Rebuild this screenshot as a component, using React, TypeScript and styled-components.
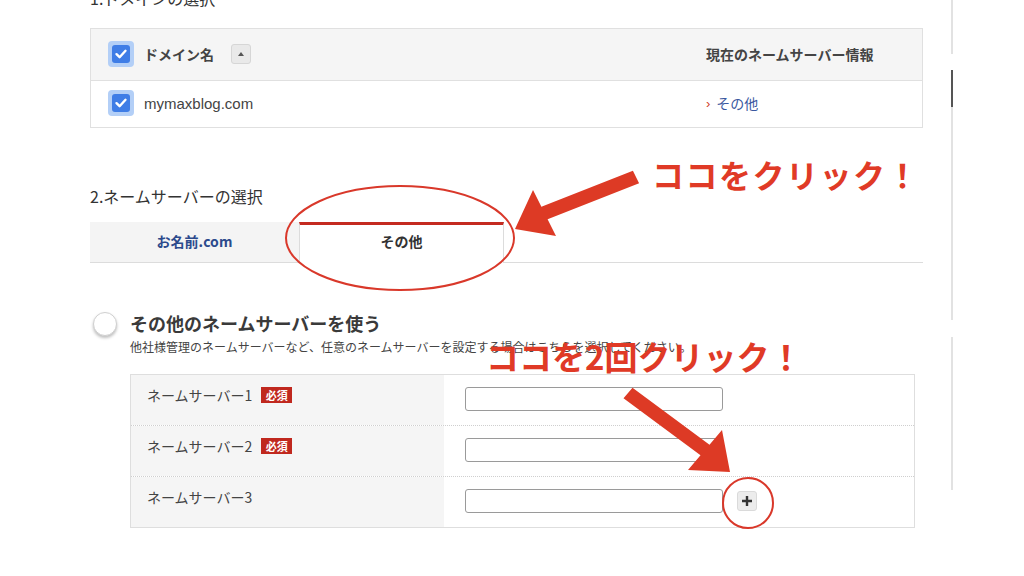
import React from 'react';
import styled, { createGlobalStyle } from 'styled-components';

const GlobalStyle = createGlobalStyle`
  html, body { margin: 0; padding: 0; background: #fff; }
  body { font-family: "Liberation Sans", "Noto Sans CJK JP", sans-serif; color: #333; }
  #root { width: 1024px; height: 576px; overflow: hidden; }
  * { box-sizing: border-box; }
`;

const JP = `"Noto Sans CJK JP", "Liberation Sans", sans-serif`;

const Page = styled.div`
  position: relative;
  width: 1024px;
  height: 576px;
  overflow: hidden;
  display: flex;
  background: #fff;
`;

const Main = styled.main`
  margin-left: 90px;
  width: 833px;
  display: flex;
  flex-direction: column;
`;

const SectionTitle = styled.h2<{ $top: number }>`
  margin: ${(p) => p.$top}px 0 0;
  font-family: ${JP};
  font-size: 16px;
  line-height: 20px;
  font-weight: 400;
  color: #333;
`;

const DomainTable = styled.div`
  margin-top: 20px;
  border: 1px solid #e0e0e0;
  display: flex;
  flex-direction: column;
`;

const DomainRow = styled.div<{ $head?: boolean }>`
  display: flex;
  align-items: center;
  height: ${(p) => (p.$head ? 52 : 46)}px;
  padding-bottom: 2px;
  background: ${(p) => (p.$head ? '#f5f5f5' : '#fff')};
  border-bottom: ${(p) => (p.$head ? '1px solid #e0e0e0' : 'none')};
  font-family: ${JP};
  font-size: 14px;
`;

const NameCell = styled.div`
  width: 615px;
  padding-left: 17px;
  display: flex;
  align-items: center;
`;

const InfoCell = styled.div`
  flex: 1;
  display: flex;
  align-items: center;
`;

const HeadText = styled.span<{ $first?: boolean }>`
  font-weight: 700;
  color: #444;
  margin-left: ${(p) => (p.$first ? 10 : 0)}px;
`;

const DomainText = styled.span`
  font-family: "Liberation Sans", sans-serif;
  font-size: 15px;
  color: #444;
  margin-left: 10px;
`;

const CheckOuter = styled.span`
  width: 26px;
  height: 26px;
  border-radius: 4px;
  background: #b3cff7;
  display: flex;
  align-items: center;
  justify-content: center;
`;

const CheckInner = styled.span`
  width: 18px;
  height: 18px;
  border-radius: 3px;
  background: #3f7de6;
  display: flex;
  align-items: center;
  justify-content: center;
`;

const SortButton = styled.span`
  margin-left: 17px;
  width: 20px;
  height: 20px;
  border: 1px solid #d6d6d6;
  border-radius: 3px;
  background: #e9e9e9;
  display: flex;
  align-items: center;
  justify-content: center;
`;

const Chevron = styled.span`
  color: #d03a2a;
  font-size: 13px;
  margin-right: 6px;
  font-family: "Liberation Sans", sans-serif;
`;

const LinkText = styled.span`
  color: #3a58a0;
`;

const Tabs = styled.div`
  margin-top: 16px;
  display: flex;
  height: 41px;
  border-bottom: 1px solid #dcdcdc;
`;

const Tab = styled.div<{ $active?: boolean; $w: number }>`
  width: ${(p) => p.$w}px;
  display: flex;
  align-items: center;
  justify-content: center;
  font-family: ${JP};
  font-size: 14px;
  font-weight: 700;
  background: ${(p) => (p.$active ? '#fff' : '#f4f4f4')};
  color: ${(p) => (p.$active ? '#333' : '#2c4a8c')};
  border-top: ${(p) => (p.$active ? '3px solid #c42a20' : '1px solid #f4f4f4')};
  border-left: ${(p) => (p.$active ? '1px solid #dcdcdc' : 'none')};
  border-right: ${(p) => (p.$active ? '1px solid #dcdcdc' : 'none')};
  margin-bottom: ${(p) => (p.$active ? '-1px' : '0')};
  padding-bottom: ${(p) => (p.$active ? '6px' : '4px')};
`;

const RadioRow = styled.div`
  margin-top: 49px;
  display: flex;
  align-items: center;
  gap: 13px;
  padding-left: 3px;
`;

const Radio = styled.span`
  width: 24px;
  height: 24px;
  border-radius: 50%;
  border: 1px solid #d0d0d0;
  background: #fff;
  box-shadow: 0 2px 3px rgba(0, 0, 0, 0.25);
`;

const RadioTitle = styled.span`
  font-family: ${JP};
  font-size: 18px;
  line-height: 24px;
  font-weight: 700;
  color: #3a3a3a;
  margin-top: -2px;
`;

const RadioNote = styled.p`
  margin: 3px 0 0 40px;
  font-family: ${JP};
  font-size: 12px;
  line-height: 16px;
  color: #444;
`;

const ServerTable = styled.div`
  margin: 19px 0 0 40px;
  width: 785px;
  border: 1px solid #dedede;
  display: flex;
  flex-direction: column;
`;

const ServerRow = styled.div<{ $last?: boolean }>`
  display: flex;
  height: ${(p) => (p.$last ? 50 : 51)}px;
  border-bottom: ${(p) => (p.$last ? 'none' : '1px dotted #cfcfcf')};
`;

const LabelCell = styled.div`
  width: 313px;
  background: #f5f5f5;
  padding: 10px 0 0 16px;
  display: flex;
  align-items: flex-start;
  gap: 9px;
  font-family: ${JP};
  font-size: 14px;
  line-height: 20px;
  color: #444;
`;

const Badge = styled.span`
  margin-top: 2px;
  width: 31px;
  height: 16px;
  background: #c0281e;
  color: #fff;
  font-size: 11px;
  line-height: 16px;
  font-weight: 700;
  text-align: center;
`;

const ValueCell = styled.div`
  flex: 1;
  padding: 12px 0 0 21px;
  display: flex;
  align-items: flex-start;
  gap: 14px;
`;

const TextInput = styled.input`
  width: 258px;
  height: 24px;
  border: 1px solid #9a9a9a;
  border-radius: 3px;
  background: #fff;
  margin: 0;
  padding: 0 6px;
`;

const PlusButton = styled.span`
  margin-top: 2px;
  width: 20px;
  height: 20px;
  border: 1px solid #dadada;
  border-radius: 3px;
  background: #ececec;
  display: flex;
  align-items: center;
  justify-content: center;
`;

const Rail = styled.div`
  margin-left: 28px;
  width: 2px;
  display: flex;
  flex-direction: column;
`;

const RailSeg = styled.div<{ $h: number; $gap: number; $color?: string }>`
  width: 2px;
  height: ${(p) => p.$h}px;
  margin-top: ${(p) => p.$gap}px;
  background: ${(p) => p.$color || '#e2e2e2'};
`;

const Overlay = styled.svg`
  position: absolute;
  left: 0;
  top: 0;
  pointer-events: none;
`;

const Callout = styled.div<{ $x: number; $y: number; $size: number; $ls: number }>`
  position: absolute;
  left: ${(p) => p.$x}px;
  top: ${(p) => p.$y}px;
  font-family: ${JP};
  font-weight: 700;
  font-size: ${(p) => p.$size}px;
  line-height: 40px;
  letter-spacing: ${(p) => p.$ls}px;
  color: #e03a26;
  white-space: nowrap;
`;

const Check = () => (
  <CheckOuter>
    <CheckInner>
      <svg width="14" height="14" viewBox="0 0 14 14">
        <path d="M2.5 7.2 L5.6 10.2 L11.5 3.8" fill="none" stroke="#fff" strokeWidth="2.4" strokeLinecap="round" strokeLinejoin="round" />
      </svg>
    </CheckInner>
  </CheckOuter>
);

const servers = [
  { label: 'ネームサーバー1', required: true },
  { label: 'ネームサーバー2', required: true },
  { label: 'ネームサーバー3', required: false },
];

export default function App() {
  return (
    <Page>
      <GlobalStyle />
      <Main>
        <SectionTitle $top={-12}>1.ドメインの選択</SectionTitle>
        <DomainTable>
          <DomainRow $head>
            <NameCell>
              <Check />
              <HeadText $first>ドメイン名</HeadText>
              <SortButton>
                <svg width="6" height="4" viewBox="0 0 6 4">
                  <path d="M0 4 L3 0 L6 4 Z" fill="#555" />
                </svg>
              </SortButton>
            </NameCell>
            <InfoCell>
              <HeadText>現在のネームサーバー情報</HeadText>
            </InfoCell>
          </DomainRow>
          <DomainRow>
            <NameCell>
              <Check />
              <DomainText>mymaxblog.com</DomainText>
            </NameCell>
            <InfoCell>
              <Chevron>›</Chevron>
              <LinkText>その他</LinkText>
            </InfoCell>
          </DomainRow>
        </DomainTable>

        <SectionTitle $top={58}>2.ネームサーバーの選択</SectionTitle>
        <Tabs>
          <Tab $w={209}>お名前.com</Tab>
          <Tab $w={205} $active>その他</Tab>
        </Tabs>

        <RadioRow>
          <Radio />
          <RadioTitle>その他のネームサーバーを使う</RadioTitle>
        </RadioRow>
        <RadioNote>他社様管理のネームサーバーなど、任意のネームサーバーを設定する場合はこちらを選択してください。</RadioNote>

        <ServerTable>
          {servers.map((s, i) => (
            <ServerRow key={s.label} $last={i === servers.length - 1}>
              <LabelCell>
                <span>{s.label}</span>
                {s.required && <Badge>必須</Badge>}
              </LabelCell>
              <ValueCell>
                <TextInput type="text" />
                {i === servers.length - 1 && (
                  <PlusButton>
                    <svg width="12" height="12" viewBox="0 0 12 12">
                      <path d="M6 1 V11 M1 6 H11" stroke="#333" strokeWidth="2.4" />
                    </svg>
                  </PlusButton>
                )}
              </ValueCell>
            </ServerRow>
          ))}
        </ServerTable>
      </Main>

      <Rail>
        <RailSeg $h={54} $gap={0} />
        <RailSeg $h={37} $gap={16} $color="#555" />
        <RailSeg $h={213} $gap={0} />
        <RailSeg $h={153} $gap={17} />
      </Rail>

      <Overlay width="1024" height="576" viewBox="0 0 1024 576">
        <ellipse cx="400" cy="238" rx="114" ry="52" fill="none" stroke="#d9382a" strokeWidth="2" />
        <circle cx="748" cy="503" r="25" fill="none" stroke="#d9382a" strokeWidth="2" />
        <polygon
          points="515,229 533,190 541.4,206.7 632.9,170.7 639.1,183.3 547.6,219.3 556,236"
          fill="#dd3a25"
        />
        <polygon
          points="632.5,387.7 709.5,444.7 722,430 730,472 688,470 700.5,455.3 623.5,398.3"
          fill="#dd3a25"
        />
      </Overlay>
      <Callout $x={652} $y={154} $size={32} $ls={1.5}>ココをクリック！</Callout>
      <Callout $x={486} $y={336} $size={33} $ls={0}>ココを2回クリック！</Callout>
    </Page>
  );
}
